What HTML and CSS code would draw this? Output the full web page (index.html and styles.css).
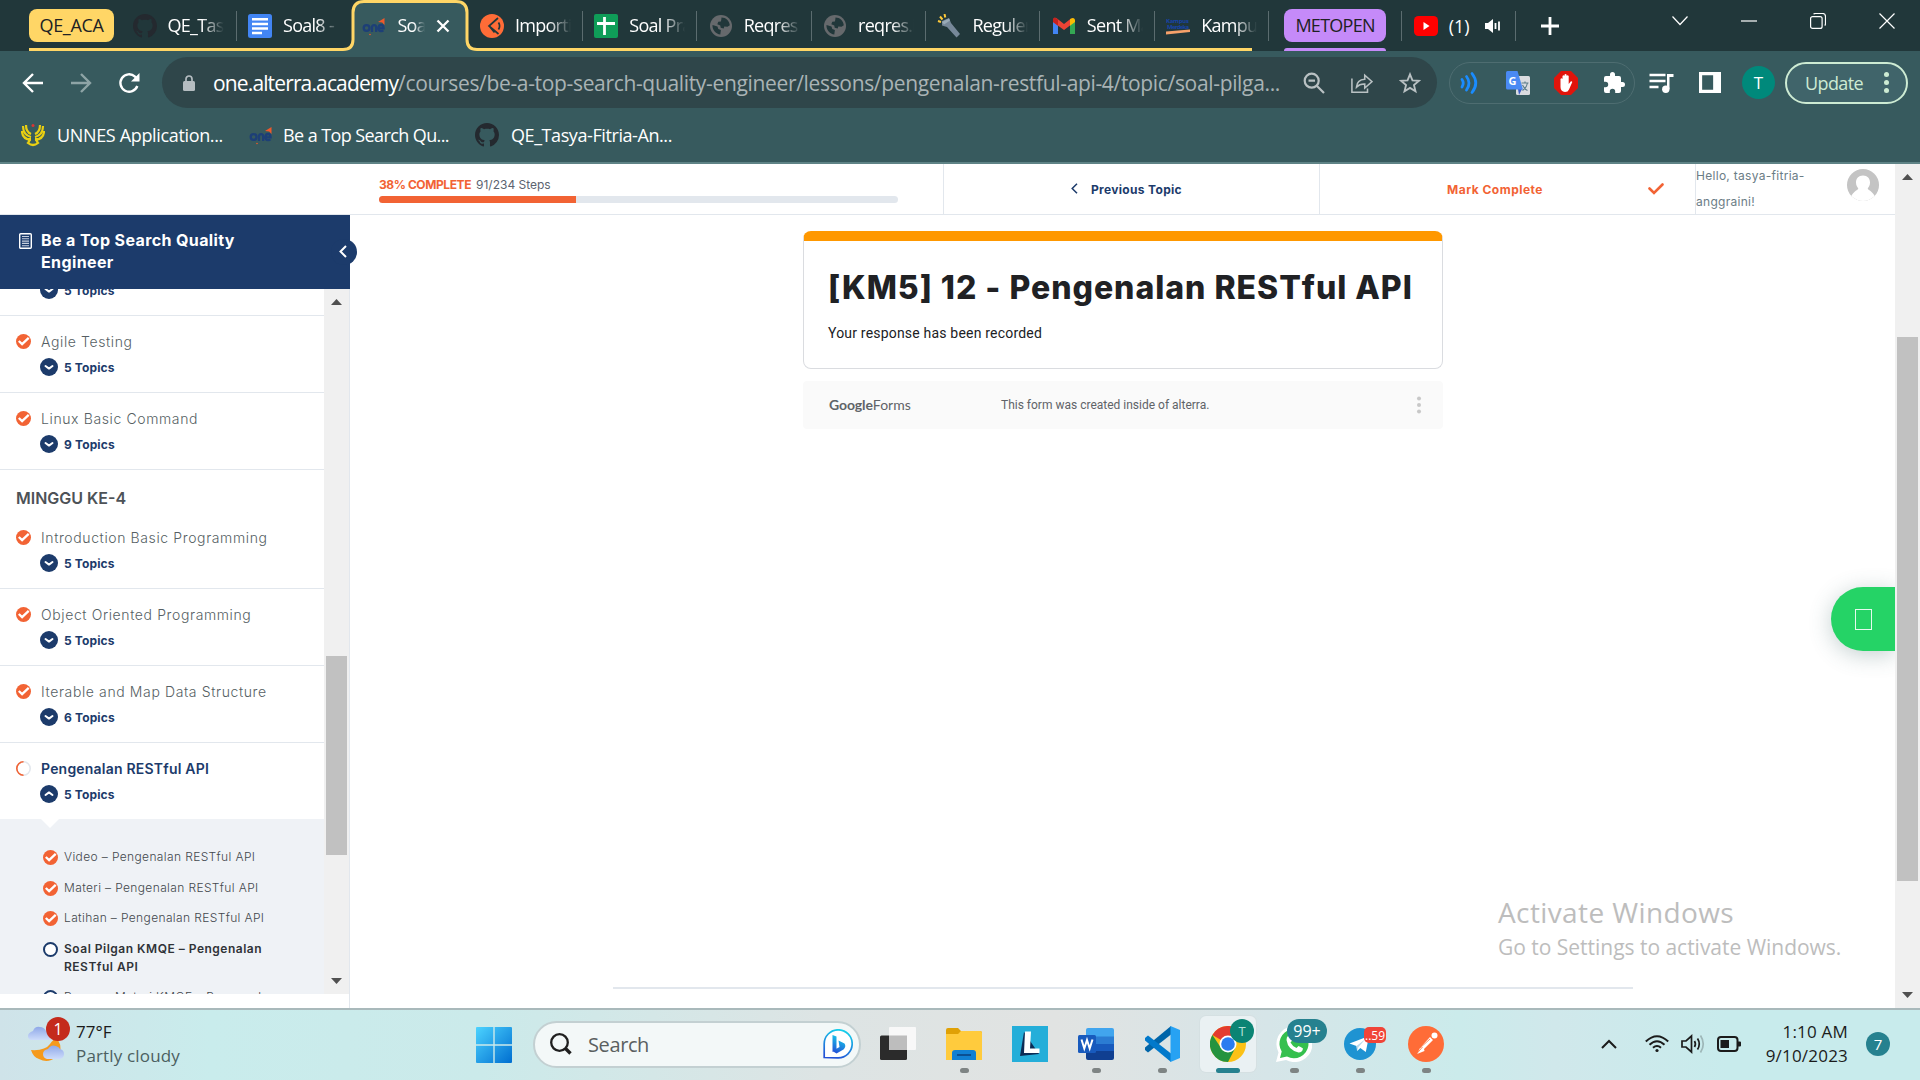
FILE: index.html
```html
<!DOCTYPE html>
<html lang="id">
<head>
<meta charset="utf-8">
<title>Soal Pilgan KMQE – Pengenalan RESTful API</title>
<link rel="stylesheet" href="styles.css">
</head>
<body>
<svg class="defs" aria-hidden="true">
  <symbol id="github" viewBox="0 0 16 16"><path fill="#24292f" d="M8 0C3.58 0 0 3.58 0 8c0 3.54 2.29 6.53 5.47 7.59.4.07.55-.17.55-.38 0-.19-.01-.82-.01-1.49-2.01.37-2.53-.49-2.69-.94-.09-.23-.48-.94-.82-1.13-.28-.15-.68-.52-.01-.53.63-.01 1.08.58 1.23.82.72 1.21 1.87.87 2.33.66.07-.52.28-.87.51-1.07-1.78-.2-3.64-.89-3.64-3.95 0-.87.31-1.59.82-2.15-.08-.2-.36-1.02.08-2.12 0 0 .67-.21 2.2.82.64-.18 1.32-.27 2-.27s1.36.09 2 .27c1.53-1.04 2.2-.82 2.2-.82.44 1.1.16 1.92.08 2.12.51.56.82 1.27.82 2.15 0 3.07-1.87 3.75-3.65 3.95.29.25.54.73.54 1.48 0 1.07-.01 1.93-.01 2.2 0 .21.15.46.55.38A8.01 8.01 0 0 0 16 8c0-4.42-3.58-8-8-8z"/></symbol>
  <symbol id="one" viewBox="0 0 24 24"><g fill="none" stroke="#1d3f77" stroke-width="2.300"><circle cx="4.600" cy="14" r="2.900"/><path d="M10 18v-4.300q0-2.600 2.100-2.600t2.100 2.600v4.300M16.600 14.300h5q-.1-3.300-2.500-3.300-2.600 0-2.600 3.200t2.700 3q1.500 0 2.100-.8"/></g><path fill="#f0592b" d="M16 8l6.500-4v7l-2.300-2.500z"/><circle cx="8" cy="20.500" r=".8" fill="#f0592b"/></symbol>
  <symbol id="globe" viewBox="0 0 24 24"><circle cx="12" cy="12" r="11" fill="#66696c"/><path fill="#21373a" d="M12.500 3.500c4.500 0 8 3.500 8.300 7.800l-2.300 1.500-3.200-.4-.6 2-3-.6-.4-2.200-3-1.400 1-2.400 2.600-.2.400-2zM3.500 11l5 1.500.8 2.600 2.600 1-.6 4.500c-4.300-.6-7.500-4-7.800-8.300z"/></symbol>
  <symbol id="check" viewBox="0 0 15 15"><circle cx="7.500" cy="7.500" r="7.500" fill="#f26334"/><path d="M2.800 7l3.300 3.200 6.600-6.400" fill="none" stroke="#fff" stroke-width="2.300"/></symbol>
  <symbol id="down" viewBox="0 0 18 18"><circle cx="9" cy="9" r="9" fill="#1c3b6b"/><path d="M5.500 8L9 10.600 12.500 8" fill="none" stroke="#fff" stroke-width="2" stroke-linecap="round" stroke-linejoin="round"/></symbol>
  <symbol id="up" viewBox="0 0 18 18"><circle cx="9" cy="9" r="9" fill="#1c3b6b"/><path d="M5.500 10L9 7.400l3.500 2.600" fill="none" stroke="#fff" stroke-width="2" stroke-linecap="round" stroke-linejoin="round"/></symbol>
  <symbol id="ring" viewBox="0 0 15 15"><circle cx="7.500" cy="7.500" r="6.500" fill="#fff" stroke="#1c3b6b" stroke-width="2"/></symbol>
  <symbol id="arrow-up" viewBox="0 0 11 6"><path fill="#505050" d="M0 6L5.500 0 11 6z"/></symbol>
  <symbol id="arrow-down" viewBox="0 0 11 6"><path fill="#505050" d="M0 0l5.500 6L11 0z"/></symbol>
</svg>

<header class="browser">
  <div class="tabstrip">
    <svg class="group-line" width="1240" height="51" viewBox="0 0 1240 51"><path d="M314 49.500q10 0 10-10V12.500q0-11 11-11H427q11 0 11 11V39.500q0 10 10 10V51H314z" fill="#375a5e"/><path d="M0 49.500H314q10 0 10-10V12.500q0-11 11-11H427q11 0 11 11V39.500q0 10 10 10H1223" fill="none" stroke="#ffd666" stroke-width="3"/></svg>
    <span class="pill pill-yellow">QE_ACA</span>
    <div class="tab first"><svg class="fav"><use href="#github"/></svg><span class="label">QE_Tasya</span></div>
    <div class="tab nosep"><svg class="fav" viewBox="0 0 24 24"><rect width="24" height="24" rx="2.500" fill="#4285f4"/><path d="M4 5.200h16M4 10h16M4 14.500h16M4 19h10" stroke="#fff" stroke-width="2.600"/></svg><span class="label">Soal8 - G</span></div>
    <div class="tab nosep active"><svg class="fav"><use href="#one"/></svg><span class="label">Soal</span><svg class="close" viewBox="0 0 14 14"><path d="M1.500 1.500l11 11M12.500 1.500l-11 11" stroke="#fff" stroke-width="2.300"/></svg></div>
    <div class="tab"><svg class="fav" viewBox="0 0 24 24"><circle cx="12" cy="12" r="12" fill="#ff6c37"/><path d="M18 4L9 12l9.500 8M10 13l4.500 5.500M18.500 8.500q2.200 3.500 0 7" fill="none" stroke="#21373a" stroke-width="1.700"/></svg><span class="label">Importing</span></div>
    <div class="tab"><svg class="fav" viewBox="0 0 24 24"><rect width="24" height="24" rx="2" fill="#0f9d58"/><path d="M3 9.500h18M10.500 3v18" stroke="#fff" stroke-width="2.800"/></svg><span class="label">Soal Prak</span></div>
    <div class="tab"><svg class="fav"><use href="#globe"/></svg><span class="label">Reqres</span></div>
    <div class="tab"><svg class="fav"><use href="#globe"/></svg><span class="label">reqres.in</span></div>
    <div class="tab"><svg class="fav" viewBox="0 0 24 24"><path d="M5 7l7-3 2 5 9 11-3.500 3.500L10 13l-5-1.500z" fill="#778899"/><path d="M5 8l7-3.500 1 2-6 4z" fill="#9aabb8"/><path d="M1 7l3 1M3 2.500l2.500 3M7.500 0l.8 3.500" stroke="#ffca3a" stroke-width="2"/></svg><span class="label">Reguler</span></div>
    <div class="tab"><svg class="fav" viewBox="0 0 24 24"><path d="M1 20V6l5 3.500V20z" fill="#4285f4"/><path d="M18 20V9.500L23 6v14z" fill="#34a853"/><path d="M1 8V5.500q1-3 4-1L12 10l7-5.500v6.200L12 16z" fill="#ea4335"/><path d="M18 5.200q3.800-2.700 5 .5V8l-5 3.700z" fill="#fbbc04"/><path d="M1 8V5.500q.5-1.900 2-2l3 2v6.200z" fill="#c5221f"/></svg><span class="label">Sent Mail</span></div>
    <div class="tab"><svg class="fav" viewBox="0 0 24 24"><path d="M0 17.500l24-2v2.600L0 20.500z" fill="#f5a06a"/><text x="0" y="9" class="tiny" textLength="23">Kampus</text><text x="1" y="15" class="tiny" textLength="22">Merdeka</text></svg><span class="label">Kampus</span></div>
    <span class="pill pill-purple">METOPEN</span>
    <div class="tab yt"><svg class="fav" viewBox="0 0 24 24"><rect y="2" width="24" height="20" rx="4.500" fill="#f00"/><path d="M9.500 8v8l6-4z" fill="#fff"/></svg><span>(1)</span><svg class="audio" viewBox="0 0 16 14"><path d="M0 4h3l5-4v14L3 10H0z" fill="#fff"/><path d="M10.500 4v6M14 2.500v9" stroke="#fff" stroke-width="1.800" fill="none"/></svg></div>
    <svg class="plus" viewBox="0 0 18 18"><path d="M9 0v18M0 9h18" stroke="#fff" stroke-width="2.800"/></svg>
    <div class="winctl">
      <svg width="16" height="16" viewBox="0 0 16 16"><path d="M.5 3.500L8 11.500l7.500-8"/></svg>
      <svg width="16" height="16" viewBox="0 0 16 16"><path d="M0 8h16"/></svg>
      <svg width="16" height="16" viewBox="0 0 16 16"><rect x=".6" y="3.600" width="11.500" height="11.800" rx="2"/><path d="M3.500 1q1-.5 2-.5h7q3 0 3 3v7q0 1.500-.8 2"/></svg>
      <svg width="16" height="16" viewBox="0 0 16 16"><path d="M.5.5l15 15M15.500.5l-15 15"/></svg>
    </div>
  </div>

  <div class="toolbar">
    <svg class="nav" viewBox="0 0 22 22"><path d="M21 11H2M11 2l-9 9 9 9" stroke="#fff"/></svg>
    <svg class="nav" viewBox="0 0 22 22"><path d="M1 11h19M11 2l9 9-9 9" stroke="#8ea4a6"/></svg>
    <svg class="nav" viewBox="0 0 22 22"><path d="M19.300 14A8.700 8.700 0 1 1 17 4.600l2 2" stroke="#fff"/><path d="M21.500 1v8.500H13z" fill="#fff" stroke="none"/></svg>
    <div class="omnibox">
      <svg class="lock" viewBox="0 0 12 16"><path d="M3 7V4a3 3 0 0 1 6 0v3" fill="none" stroke="#b5bdc1" stroke-width="1.700"/><rect y="6" width="12" height="10" rx="1.500" fill="#b5bdc1"/></svg>
      <span class="url"><b>one.alterra.academy</b>/courses/be-a-top-search-quality-engineer/lessons/pengenalan-restful-api-4/topic/soal-pilga...</span>
      <span class="obicons">
        <svg viewBox="0 0 22 22"><circle cx="8.700" cy="8.700" r="7"/><path d="M14 14l7 7M5.500 8.700h6.500"/></svg>
        <svg viewBox="0 0 24 22"><path d="M1 6v15h17v-4M6 15.500q.5-8 9-8.500V2.500l8 7-8 7v-4.300q-5.500-.3-9 3.300z" stroke-width="1.700"/></svg>
        <svg viewBox="0 0 24 24"><path d="M12 2.500l2.700 6.600 7.100.5-5.500 4.600 1.700 6.900-6-3.800-6 3.800 1.700-6.900L2.200 9.600l7.100-.5z" stroke-width="2"/></svg>
      </span>
    </div>
    <div class="exts">
      <svg viewBox="0 0 24 24"><path d="M4 8.500q2.500 3.500 0 7.500M8.500 5.500q5 6.500 0 13.500M14 2.500q7.500 9.500 0 19" fill="none" stroke="#1a8cff" stroke-width="2.800" stroke-linecap="round"/></svg>
      <svg viewBox="0 0 24 24"><rect x="10" y="5" width="14" height="19" rx="1.500" fill="#dadce0"/><path d="M12 18h4l-3 6z" fill="#3a5bc7"/><path d="M1.500 0h10L17 18.500H1.500Q0 18.500 0 17V1.500Q0 0 1.500 0z" fill="#4a8af4"/><text x="2.500" y="13.500" class="g">G</text><path d="M15.500 12h7M19 10.500V12M21.500 12q-1 5-5 7.500M16.500 14q2 4 5 5.500" fill="none" stroke="#5f7f8c" stroke-width="1.200"/></svg>
      <svg viewBox="0 0 24 24"><path d="M7 0h10l7 7v10l-7 7H7l-7-7V7z" fill="#e1140b"/><path d="M6.500 13V8q1-1.500 2 0v3.500V5q1-1.500 2 0v6V3.800q1-1.400 2.100 0V11V5q1-1.400 2.100 0v8l2-2.500q1.600-.5 1.500.8L15 18.500q-1 2.500-4 2.500-4.500-.5-4.500-5z" fill="#fff"/></svg>
      <svg viewBox="0 0 24 24"><path d="M20.500 11H19V7a2 2 0 0 0-2-2h-4V3.500a2.500 2.500 0 0 0-5 0V5H4a2 2 0 0 0-2 2v3.800h1.500a2.700 2.700 0 0 1 0 5.400H2V20a2 2 0 0 0 2 2h3.800v-1.500a2.700 2.700 0 0 1 5.400 0V22H17a2 2 0 0 0 2-2v-4h1.500a2.500 2.500 0 0 0 0-5z" fill="#fff"/></svg>
    </div>
    <svg class="music" viewBox="0 0 24 22"><path d="M0 3h16M0 9h16M0 15h9" stroke="#fff" stroke-width="2.300"/><path d="M17.500 17V2H24v3h-4v12z" fill="#fff"/><circle cx="16.300" cy="17.300" r="3.700" fill="#fff"/></svg>
    <svg class="panel" viewBox="0 0 21 20"><path fill="#fff" fill-rule="evenodd" d="M0 0h21v20H0zM3 3v14h10.500V3z"/></svg>
    <span class="avatar">T</span>
    <span class="update">Update<i class="dots"></i></span>
  </div>

  <div class="bookmarks">
    <span class="bm1"><svg viewBox="0 0 24 24"><g fill="none" stroke="#e9cf12" stroke-width="2.200"><path d="M10 14Q2 12 2 3M10 17Q1 16 1 8M10 11Q5 9 5 2M14 14q8-2 8-11M14 17q9-1 9-9M14 11q5-2 5-9M9 13q0 5-2 7 5 4 10 0-2-2-2-7"/></g><circle cx="12" cy="2.500" r="1.500" fill="#d33"/></svg>UNNES Application...</span>
    <span class="bm2"><svg><use href="#one"/></svg>Be a Top Search Qu...</span>
    <span class="bm3"><svg><use href="#github"/></svg>QE_Tasya-Fitria-An...</span>
  </div>
</header>

<main class="page">
  <div class="col">
    <div class="topbar">
      <div class="blank"></div>
      <div class="progress">
        <p><b>38% COMPLETE</b>91/234 Steps</p>
        <div class="track"><div class="fill" style="width:38%"></div></div>
      </div>
      <div class="cell prev"><svg viewBox="0 0 7 11"><path d="M6 .7L1.200 5.500 6 10.300" fill="none" stroke="#1c3b6b" stroke-width="1.500"/></svg>Previous Topic</div>
      <div class="cell mark">Mark Complete<svg viewBox="0 0 16 12"><path d="M1.500 5.500L6 10 14.500 1.500" fill="none" stroke="#f26334" stroke-width="2.600" stroke-linecap="round"/></svg></div>
      <div class="cell user"><p>Hello, tasya-fitria-<br>anggraini!</p><svg viewBox="0 0 32 32"><clipPath id="c"><circle cx="16" cy="16" r="16"/></clipPath><g clip-path="url(#c)"><rect width="32" height="32" fill="#c4c4c4"/><path d="M16 6.500c4.500 0 7 3 7 7 0 3-1.200 4.500-2.300 6 .3 2 7.300 3 8.300 12.500H3c1-9.500 8-10.500 8.300-12.500C10.200 18 9 16.500 9 13.500c0-4 2.500-7 7-7z" fill="#fff"/></g></svg></div>
    </div>
    <div class="body">
      <aside class="sidebar">
        <div class="course">
          <svg viewBox="0 0 13 16"><rect x=".7" y=".7" width="11.600" height="14.600" rx="1" fill="none" stroke="#fff" stroke-width="1.400"/><path d="M3 3.500h7M3 5.800h7M3 8.100h7M3 10.400h7M3 12.700h7" stroke="#c7d0de" stroke-width="1.100"/></svg>
          <h2>Be a Top Search Quality<br>Engineer</h2>
          <span class="toggle"><svg viewBox="0 0 8 13"><path d="M7 1L1.500 6.500 7 12" fill="none" stroke="#fff" stroke-width="2"/></svg></span>
        </div>
        <div class="listwrap">
          <div class="list">
            <div class="lesson cut"><h3><svg><use href="#check"/></svg></h3><p><svg><use href="#down"/></svg>5 Topics</p></div>
            <div class="lesson"><h3><svg><use href="#check"/></svg>Agile Testing</h3><p><svg><use href="#down"/></svg>5 Topics</p></div>
            <div class="lesson"><h3><svg><use href="#check"/></svg>Linux Basic Command</h3><p><svg><use href="#down"/></svg>9 Topics</p></div>
            <h4>MINGGU KE-4</h4>
            <div class="lesson"><h3><svg><use href="#check"/></svg>Introduction Basic Programming</h3><p><svg><use href="#down"/></svg>5 Topics</p></div>
            <div class="lesson"><h3><svg><use href="#check"/></svg>Object Oriented Programming</h3><p><svg><use href="#down"/></svg>5 Topics</p></div>
            <div class="lesson"><h3><svg><use href="#check"/></svg>Iterable and Map Data Structure</h3><p><svg><use href="#down"/></svg>6 Topics</p></div>
            <div class="lesson current"><h3><svg viewBox="0 0 15 15" fill="none" stroke-width="1.600"><circle cx="7.500" cy="7.500" r="6.700" stroke="#e2e7ed"/><path d="M7.500.8a6.700 6.700 0 0 0 0 13.400" stroke="#f26334"/></svg>Pengenalan RESTful API</h3><p><svg><use href="#up"/></svg>5 Topics</p></div>
            <ul>
              <li><svg><use href="#check"/></svg>Video – Pengenalan RESTful API</li>
              <li><svg><use href="#check"/></svg>Materi – Pengenalan RESTful API</li>
              <li><svg><use href="#check"/></svg>Latihan – Pengenalan RESTful API</li>
              <li class="here"><svg><use href="#ring"/></svg><span>Soal Pilgan KMQE – Pengenalan<br>RESTful API</span></li>
              <li><svg><use href="#ring"/></svg><span>Resume Materi KMQE – Pengenalan</span></li>
            </ul>
          </div>
          <div class="scroll side"><svg><use href="#arrow-up"/></svg><i></i><svg><use href="#arrow-down"/></svg></div>
        </div>
      </aside>
      <section class="content">
        <div class="form">
          <h1>[KM5] 12 - Pengenalan RESTful API</h1>
          <p>Your response has been recorded</p>
        </div>
        <div class="formfoot"><span class="gf"><b>Google</b>Forms</span><span class="made">This form was created inside of alterra.</span><i class="dots"></i></div>
        <a class="chat"><i></i></a>
        <div class="watermark"><p class="w1">Activate Windows</p><p class="w2">Go to Settings to activate Windows.</p></div>
        <hr>
      </section>
    </div>
  </div>
  <div class="scroll main"><svg><use href="#arrow-up"/></svg><i></i><svg><use href="#arrow-down"/></svg></div>
</main>

<footer class="taskbar">
  <div class="weather">
    <svg viewBox="0 0 42 44"><defs><linearGradient id="cl" x2="0" y2="1"><stop offset="0" stop-color="#8fa8e8"/><stop offset="1" stop-color="#cddcfb"/></linearGradient></defs><path d="M3 20q-3-1-3-4t5-5q2-5 7-4 4 0 6 4 5 1 5 5 0 3-3 4z" fill="url(#cl)"/><path d="M3 30q14 1 19-6t8-4q6 10-2 17t-17 2q-6-2-8-9z" fill="#f59a1c"/><path d="M19 39q-4-1-4-5t5-5q3-5 8-3 3 1 4 3 4 1 4 5 0 4-4 5z" fill="url(#cl)"/></svg>
    <span class="badge red">1</span>
    <p>77°F<br><span>Partly cloudy</span></p>
  </div>
  <svg class="win" viewBox="0 0 36 36"><defs><linearGradient id="wg" gradientUnits="userSpaceOnUse" x1="0" y1="0" x2="36" y2="36"><stop offset="0" stop-color="#4cd3ff"/><stop offset="1" stop-color="#006ed0"/></linearGradient></defs><path fill="url(#wg)" d="M0 1q0-1 1-1h16.300v17.300H0zM18.700 0H35q1 0 1 1v16.300H18.700zM0 18.700h17.300V36H1q-1 0-1-1zM18.700 18.700H36V35q0 1-1 1H18.700z"/></svg>
  <div class="search"><svg class="glass" viewBox="0 0 22 22"><circle cx="9.500" cy="9.500" r="8.300"/><path d="M15.500 15.500l5 5" stroke-width="3.300"/></svg><span>Search</span><svg class="bing" viewBox="0 0 30 30"><defs><linearGradient id="bg" x1=".6" x2=".3" y2="1"><stop offset="0" stop-color="#16cfea"/><stop offset="1" stop-color="#2350d6"/></linearGradient></defs><path d="M1.200 28.500V15A14 14 0 1 1 15 28.800z" fill="#fff" stroke="url(#bg)" stroke-width="1.700"/><path d="M9.500 6l4 1.600v13L9.500 23zM15.500 11.500l6 3q2 3-1 6l-7 4-4-2.500 7-4z" fill="url(#bg)"/></svg></div>
  <div class="apps">
    <div class="app"><svg viewBox="0 0 36 36"><rect y="9.500" width="27" height="24.500" rx="1.500" fill="#2b2b2b"/><rect x="9" y="1" width="27" height="23" rx="1" fill="#f8f8f8"/><path d="M9 9.500h18V24H9z" fill="#bdbdbd"/></svg></div>
    <div class="app run"><svg viewBox="0 0 36 36"><path d="M0 4q0-2 2-2h10l3 3h19q2 0 2 2v27H0z" fill="#e0a106"/><path d="M0 8h12l3-3h19q2 0 2 2v27H0z" fill="#ffcb3d"/><path d="M6 34v-7q0-3 3-3h18q3 0 3 3v7z" fill="#1180d3"/><path d="M11 29h14" stroke="#0b4f92" stroke-width="2"/></svg></div>
    <div class="app"><svg viewBox="0 0 36 36"><path d="M0 0h36v36H0z" fill="#24aed9"/><path d="M12 6L8 30l19-2z" fill="#0c2c55"/><path d="M13 5.500h6L18 22.500h9.500V27H12z" fill="#fff"/></svg></div>
    <div class="app run"><svg viewBox="0 0 36 36"><path d="M8 4q0-2 2-2h24q2 0 2 2v7H8z" fill="#41a5ee"/><path d="M8 10.500h28v8H8z" fill="#2b7cd3"/><path d="M8 18h28v7.500H8z" fill="#185abd"/><path d="M8 25h28v7q0 2-2 2H10q-2 0-2-2z" fill="#103f91"/><rect y="9" width="18" height="18" rx="1.500" fill="#185abd"/><path d="M3.500 13.500l2.800 9 2.700-8.500 2.700 8.500 2.800-9" fill="none" stroke="#fff" stroke-width="2"/></svg></div>
    <div class="app run"><svg viewBox="0 0 36 36"><path d="M1 24l3 2.500 23-18V0L1 21.500z" fill="#0065a9"/><path d="M1 12l3-2.500 23 18V36L1 14.500z" fill="#0179cb"/><path d="M26.500 0L36 4v28l-9.500 4z" fill="#27a2f3"/></svg></div>
    <div class="app open"><svg viewBox="0 0 36 36"><circle cx="18" cy="18" r="18" fill="#fbc116"/><path d="M18 18L2.400 9A18 18 0 0 1 33.600 9z" fill="#e33b2e"/><path d="M18 18l7 4.500L18 36A18 18 0 0 1 2.400 9l8 12z" fill="#24933f"/><circle cx="18" cy="18" r="8.500" fill="#fff"/><circle cx="18" cy="18" r="6.800" fill="#2a7cf0"/></svg><span class="badge teal">T</span></div>
    <div class="app run"><svg viewBox="0 0 36 36"><path d="M0 36l2.500-9.500A18 18 0 1 1 10 34z" fill="#fff"/><path d="M4 32l1.700-6.500A14.500 14.500 0 1 1 11 30.500z" fill="#35c04e"/><path d="M12 10q2-1 3 1l1 3q0 1-1.500 2.500 2 4 6 5.500l2-2q3 1 4.500 2.500-.5 4-4.500 4Q12 24 10.500 14q0-3 1.500-4z" fill="#fff"/></svg><span class="badge wa">99+</span></div>
    <div class="app run"><svg viewBox="0 0 36 36"><circle cx="18" cy="18" r="16" fill="#1e93d2"/><path d="M7.500 17.500L27 10l-3.200 16-5.500-4-3 3-.8-5z" fill="#fff"/><path d="M14.500 20l9-7-7 8-1.500 4z" fill="#b9d9ec"/></svg><span class="badge tg">..59</span></div>
    <div class="app run"><svg viewBox="0 0 36 36"><circle cx="18" cy="18" r="18" fill="#ff6c37"/><circle cx="26.500" cy="9.500" r="3" fill="#fff"/><path d="M22 11l3 3-9 9 .5 2L9 28l3-6z" fill="#fff"/><path d="M12 22l10-9M8.500 28l6-7" stroke="#ff6c37" stroke-width=".8"/></svg></div>
  </div>
  <div class="tray">
    <svg class="chev" viewBox="0 0 16 10"><path d="M1 9l7-7 7 7"/></svg>
    <svg class="wifi" viewBox="0 0 24 18"><path d="M.8 6.500q11.200-10.500 22.400 0M4.500 9.700q7.500-7 15 0M8 12.700q4-3.500 8 0"/><circle cx="12" cy="15.500" r="1.600" fill="#1b1b1b" stroke="none"/></svg>
    <svg class="vol" viewBox="0 0 24 20"><path d="M1 7h4l5.500-5v16L5 13H1zM13.500 7q1.800 3 0 6M16.500 4.500q3.500 5.500 0 11"/><path d="M19.500 1.500q5.500 8.500 0 17" opacity=".25"/></svg>
    <svg class="bat" viewBox="0 0 24 16"><rect x="1" y="1" width="19.500" height="14" rx="3"/><path d="M3.500 4h8.500v8H3.500zM21 5.500h2q1 0 1 1v3q0 1-1 1h-2z" fill="#1b1b1b" stroke="none"/></svg>
    <p class="clock">1:10 AM<br>9/10/2023</p>
    <span class="badge count">7</span>
  </div>
</footer>
</body>
</html>
```
FILE: styles.css
```css
* { box-sizing: border-box; }
body { margin: 0; width: 1920px; height: 1080px; overflow: hidden; position: relative; font-family: "Open Sans", "Noto Sans", sans-serif; background: #fff; }
h1, h2, h3, h4, p, ul { margin: 0; padding: 0; font-weight: 400; }
ul { list-style: none; }
svg { display: block; flex: none; }
.defs { position: absolute; width: 0; height: 0; }

/* browser chrome */
.browser { height: 164px; background: #375a5e; border-bottom: 2px solid #5f8386; color: #fff; }
.tabstrip { position: relative; height: 51px; background: #21373a; display: flex; align-items: center; padding-left: 29px; font-size: 18px; letter-spacing: -.04em; }
.tabstrip > * { flex: none; }
.group-line { position: absolute; left: 29px; top: 0; }
.pill { height: 33px; border-radius: 8px; display: flex; align-items: center; justify-content: center; color: #202124; padding-bottom: 1px; }
.pill-yellow { width: 85px; background: #ffd666; margin-right: 7px; letter-spacing: -.018em; }
.pill-purple { width: 102px; background: #c58af9; margin: 0 15px; position: relative; }
.pill-purple::after { content: ""; position: absolute; left: 0; right: 0; top: 39px; height: 3px; background: #c58af9; border-radius: 3px 3px 0 0; }
.tab { position: relative; width: 114.400px; height: 30px; display: flex; align-items: center; padding-left: 11.500px; border-right: 1px solid #5b6c6f; }
.tab.first { width: 115.500px; }
.tab.active { width: 117.500px; }
.tab.nosep { border-color: transparent; }
.fav { width: 24px; height: 24px; margin-right: 11px; }
.tiny { font: 700 6px "Open Sans", sans-serif; letter-spacing: 0; fill: #1744a8; }
.label { width: 56px; overflow: hidden; white-space: nowrap; margin-top: -2px; -webkit-mask-image: linear-gradient(90deg, #000 60%, transparent); mask-image: linear-gradient(90deg, #000 60%, transparent); }
.active .label { width: 28px; margin-right: 11px; }
.close { width: 14px; height: 14px; }
.yt { border-left: 1px solid #5b6c6f; letter-spacing: 0; }
.audio { width: 16px; height: 14px; margin-left: 15px; }
.plus { width: 18px; height: 18px; margin-left: 25px; }
.winctl { display: flex; gap: 53px; margin: -9px 0 0 113px; }
.winctl svg { fill: none; stroke: #fff; stroke-width: 1.200px; }
.toolbar { height: 63px; display: flex; align-items: center; padding-left: 22px; }
.nav { width: 22px; height: 22px; margin-right: 26px; fill: none; stroke-width: 2.400px; }
.omnibox { width: 1275px; height: 51px; border-radius: 26px; background: #2f464a; margin-left: -4px; display: flex; align-items: center; padding-left: 21px; }
.lock { width: 12px; height: 16px; margin-right: 18px; }
.url { width: 1078px; white-space: nowrap; font-size: 21px; color: #a9b3b5; letter-spacing: -.0159em; }
.url b { font-weight: 400; color: #fff; letter-spacing: -.041em; }
.obicons { display: flex; gap: 26px; margin-left: 12px; }
.obicons svg { width: 22px; height: 22px; fill: none; stroke: #b9c1c3; stroke-width: 2.200px; }
.exts { width: 186px; height: 42px; margin-left: 12px; border: 1.500px solid #4e6d71; border-radius: 21px; display: flex; align-items: center; gap: 24px; padding-left: 8px; }
.exts svg { width: 24px; height: 24px; }
.g { font: 700 11px "Open Sans", sans-serif; fill: #fff; }
.music { width: 25px; height: 22px; margin-left: 14px; }
.panel { width: 22px; height: 21px; margin-left: 25px; }
.avatar { width: 33px; height: 33px; border-radius: 50%; background: #00897b; display: grid; place-items: center; font-size: 17px; margin-left: 21px; }
.update { width: 123px; height: 42px; margin-left: 10px; border: 2px solid #cdebd3; border-radius: 21px; background: #40646a; color: #cdebd3; font-size: 18px; letter-spacing: -.034em; display: flex; align-items: center; justify-content: space-between; padding: 0 17px 0 18px; }
.dots { width: 5px; height: 5px; border-radius: 50%; background: currentColor; box-shadow: 0 -8px currentColor, 0 8px currentColor; }
.bookmarks { height: 41px; display: flex; align-items: center; padding-left: 21px; font-size: 18px; white-space: nowrap; }
.bookmarks > span { display: flex; align-items: center; gap: 12px; margin-right: 26px; }
.bookmarks svg { width: 24px; height: 24px; }
.bm1 { letter-spacing: -.0192em; }
.bookmarks .bm2 { letter-spacing: -.0329em; gap: 10px; }
.bm3 { letter-spacing: -.0231em; }

/* page */
.page { height: 844px; display: flex; font-family: Inter, "Open Sans", sans-serif; }
.col { width: 1895px; }
.topbar { height: 51px; border-bottom: 1px solid #e2e7ed; display: flex; font-size: 12px; }
.blank { width: 350px; }
.progress { width: 593px; padding: 10px 45px 0 29px; color: #5c6370; }
.progress p { height: 22px; line-height: 21px; white-space: nowrap; }
.progress b { color: #f26334; margin-right: 5px; letter-spacing: -.035em; }
.track { height: 7px; border-radius: 4px; background: #e2e7ed; overflow: hidden; }
.fill { height: 7px; background: #f26334; }
.cell { border-left: 1px solid #e2e7ed; display: flex; align-items: center; width: 376px; font-weight: 700; white-space: nowrap; }
.prev { color: #1c3b6b; padding-left: 127px; letter-spacing: .027em; }
.prev svg { width: 7px; height: 11px; margin-right: 13px; margin-top: -2px; }
.mark { color: #f26334; padding: 0 31px 0 127px; justify-content: space-between; letter-spacing: .041em; }
.mark svg { width: 16px; height: 12px; }
.user { width: 200px; font-weight: 400; color: #6b7d86; justify-content: space-between; padding-right: 16px; letter-spacing: .024em; }
.user p { line-height: 26px; }
.user svg { width: 32px; height: 32px; margin-top: -8px; }
.body { height: 793px; display: flex; }
.sidebar { width: 350px; border-right: 1px solid #e2e7ed; }
.course { position: relative; width: 350px; height: 74px; background: #1c3b6b; color: #fff; display: flex; padding: 14px 0 0 19px; z-index: 1; }
.course > svg { width: 13px; height: 16px; margin: 4px 9px 0 0; }
.course h2 { font-size: 16px; line-height: 22px; font-weight: 700; letter-spacing: .024em; }
.toggle { position: absolute; left: 331px; top: 24px; width: 26px; height: 26px; border-radius: 50%; background: #1c3b6b; }
.toggle svg { width: 8px; height: 13px; margin: 6px 0 0 8px; }
.listwrap { height: 705px; display: flex; overflow: hidden; }
.list { width: 324px; overflow: hidden; }
.lesson { height: 77px; border-bottom: 1px solid #e2e7ed; padding: 15px 0 0 16px; }
.lesson.cut { margin-top: -50px; }
.lesson h3 { height: 21px; display: flex; align-items: center; font-size: 14px; color: #565f64; white-space: nowrap; font-weight: 300; letter-spacing: .044em; }
.lesson h3 svg { width: 15px; height: 15px; margin-right: 10px; }
.lesson p { height: 18px; margin: 6px 0 0 24px; display: flex; align-items: center; font-size: 12px; font-weight: 700; color: #1c3b6b; letter-spacing: .012em; }
.lesson p svg { width: 18px; height: 18px; margin-right: 6px; }
.lesson.current { border: 0; height: 76px; }
.lesson.current h3 { color: #1c3b6b; font-weight: 600; letter-spacing: .0147em; }
.list h4 { height: 42px; padding: 17px 0 0 16px; font-size: 16px; line-height: 22px; font-weight: 600; color: #4d5257; }
.list ul { position: relative; background: #eff2f6; height: 210px; padding: 29px 0 0 43px; display: flex; flex-direction: column; gap: 12.600px; }
.list ul::before { content: ""; position: absolute; left: 41px; top: 0; border: 9px solid transparent; border-top-color: #fff; border-bottom: 0; }
.list li { display: flex; font-size: 12px; line-height: 18px; color: #43484d; white-space: nowrap; font-weight: 300; letter-spacing: .031em; }
.list li svg { width: 15px; height: 15px; margin: 2px 6px 0 0; }
.list li.here { font-weight: 600; color: #303338; letter-spacing: .042em; }
.scroll { width: 25px; background: #f0f0f0; display: flex; flex-direction: column; align-items: center; padding: 10px 0; }
.scroll svg { width: 11px; height: 6px; }
.scroll i { width: 21px; background: #c1c1c1; }
.side i { height: 199px; margin: 351px 0 123px; }
.main i { height: 545px; margin: 157px 0 111px; }
.content { position: relative; width: 1545px; padding: 16px 0 0 453px; }
.form { width: 640px; height: 138px; border: 1px solid #dadce0; border-top: 10px solid #ff9800; border-radius: 8px; padding: 26px 0 0 24px; color: #202124; white-space: nowrap; }
.form h1 { font-size: 32px; line-height: 42px; font-weight: 800; letter-spacing: .0308em; }
.form p { font: 14px/20px Roboto, sans-serif; margin-top: 14px; letter-spacing: .0139em; }
.formfoot { width: 640px; height: 48px; margin-top: 12px; background: #fafafa; border-radius: 4px; display: flex; align-items: center; padding: 0 22px 0 26px; font: 12px Roboto, sans-serif; color: #5f6368; }
.gf { width: 172px; font: 14px Lato, sans-serif; letter-spacing: 0; margin-top: -2px; }
.gf b { font-weight: 700; letter-spacing: -.1px; }
.made { flex: 1; }
.formfoot .dots { width: 4px; height: 4px; color: #c8c8c8; box-shadow: 0 -6.500px, 0 6.500px; }
.chat { position: absolute; right: 0; top: 372px; width: 64px; height: 64px; border-radius: 32px 0 0 32px; background: #25d366; box-shadow: 0 4px 22px rgba(60, 100, 100, .3); clip-path: inset(-40px 0 -40px -40px); }
.chat i { display: block; width: 17px; height: 21px; margin: 22px 0 0 24px; border: 1px solid #e6faee; }
.watermark { position: absolute; left: 1148px; top: 676px; font-family: "Open Sans", sans-serif; color: #bdbdbd; white-space: nowrap; }
.w1 { font-size: 28px; line-height: 42px; letter-spacing: .014em; }
.w2 { font-size: 21px; line-height: 28px; letter-spacing: -.001em; }
.content hr { position: absolute; left: 263px; top: 772px; width: 1020px; height: 2px; margin: 0; border: 0; background: #e2e7ed; }

/* taskbar */
.taskbar { height: 72px; border-top: 2px solid #a9b9bb; background: linear-gradient(90deg, #cfe3e9 0, #c9ecec 11%, #cbeaea 25%, #dde4e4 43%, #e1e3e2 55%, #d6e5e8 66%, #cbebeb 76%, #d0e8eb 81%, #c8ebec 90%, #c8ebec); display: flex; align-items: center; color: #1b1b1b; font-size: 17px; }
.weather { position: relative; display: flex; width: 448px; padding-left: 28px; }
.weather > svg { width: 42px; height: 44px; margin-right: 6px; margin-top: -2px; }
.weather p { line-height: 24px; margin-top: -2px; }
.weather p span { color: #4c5f61; letter-spacing: .0094em; }
.badge { position: absolute; display: grid; place-items: center; color: #fff; }
.red { left: 46px; top: -5px; width: 24px; height: 24px; border-radius: 50%; background: #c42b1c; font-size: 16px; }
.win { width: 36px; height: 36px; margin-left: 28px; }
.search { width: 328px; height: 47px; margin-left: 21px; margin-top: -2px; border: 2px solid #c3d0d2; border-radius: 24px; background: #f3f8f8; display: flex; align-items: center; padding: 0 6px 0 15px; font-size: 20px; color: #5a5f60; letter-spacing: -.0195em; }
.glass { width: 22px; height: 22px; margin-right: 16px; fill: none; stroke: #1f1f1f; stroke-width: 2.300px; }
.bing { width: 30px; height: 30px; margin-left: auto; }
.apps { display: flex; margin-left: 9px; gap: 10px; margin-top: -2px; }
.app { position: relative; width: 56px; height: 56px; padding: 10px; border-radius: 6px; }
.app > svg { width: 36px; height: 36px; }
.open { background: #eaf1f3; box-shadow: 0 0 0 1px #d5e0e2; }
.run::after, .open::after { content: ""; position: absolute; left: 24px; bottom: -1px; width: 9px; height: 5px; border-radius: 3px; background: #7e8484; }
.open::after { left: 16px; width: 24px; background: #26818f; }
.teal { left: 30px; top: 3px; width: 24px; height: 24px; border-radius: 50%; background: #0b8474; color: #b5e0d8; font-size: 13px; }
.wa { left: 21px; top: 3px; width: 40px; height: 24px; border-radius: 12px; background: #26818f; font-size: 16px; }
.tg { left: 32px; top: 11px; width: 22px; height: 16px; border-radius: 5px; background: #f04438; font-size: 12px; }
.tray { margin-left: auto; display: flex; align-items: center; padding-right: 30px; margin-top: -2px; }
.tray svg { fill: none; stroke: #1b1b1b; stroke-width: 2px; }
.chev { width: 16px; height: 10px; margin-right: 28px; }
.wifi { width: 24px; height: 18px; margin-right: 12px; }
.tray .vol { width: 24px; height: 20px; margin-right: 12px; stroke-width: 1.700px; }
.bat { width: 24px; height: 16px; }
.clock { width: 107px; text-align: right; line-height: 24px; letter-spacing: .012em; }
.count { position: static; width: 24px; height: 24px; border-radius: 50%; background: #26818f; font-size: 15px; margin-left: 18px; }
```
